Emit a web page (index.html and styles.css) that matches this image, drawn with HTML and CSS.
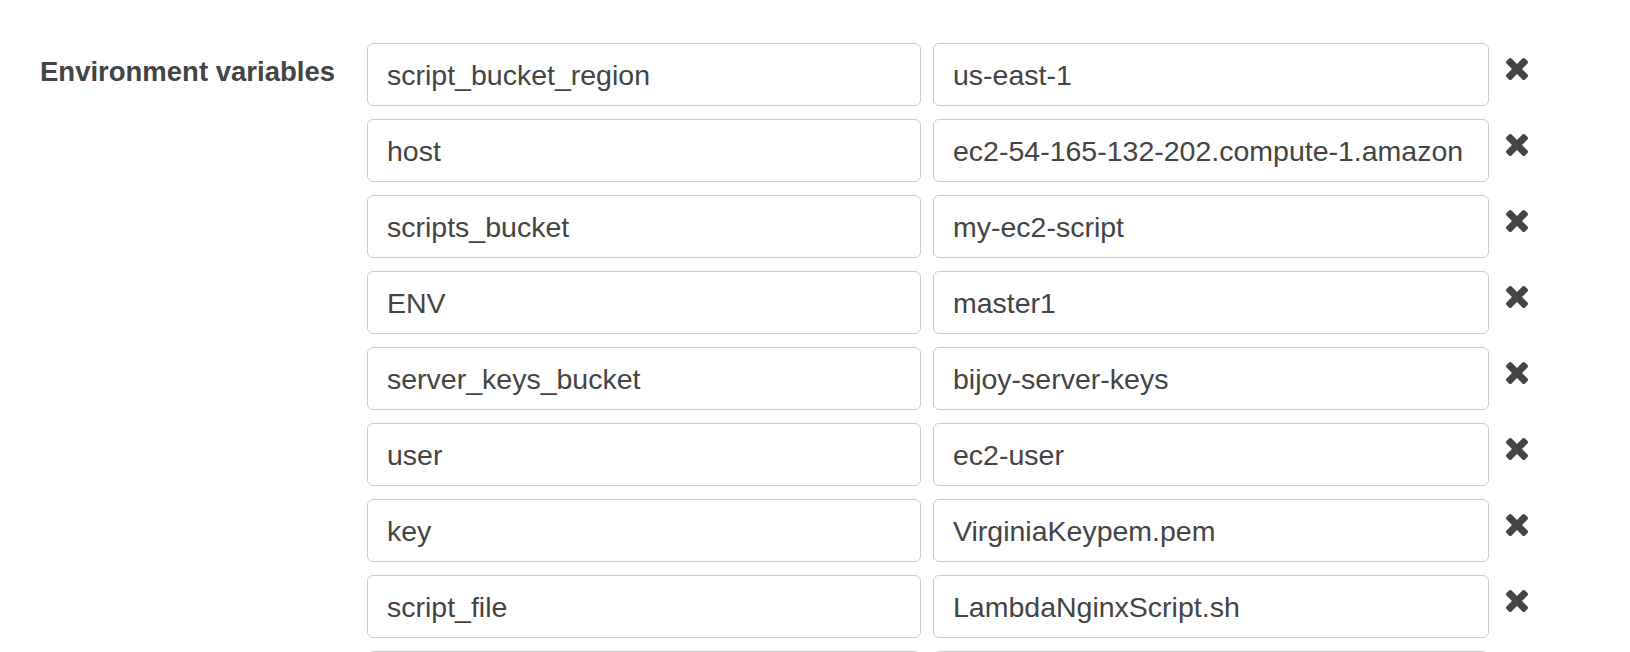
FILE: index.html
```html
<!DOCTYPE html>
<html lang="en">
<head>
<meta charset="utf-8">
<title>Environment variables</title>
<link rel="stylesheet" href="styles.css">
</head>
<body>
<div class="env">
  <div class="env-label">Environment variables</div>
  <div class="env-rows">
    <div class="env-row">
      <div class="field"><span class="val">script_bucket_region</span></div>
      <div class="field"><span class="val">us-east-1</span></div>
      <span class="remove"><svg viewBox="110 366 1188 1188" width="22" height="22"><path d="M1298 1322q0 40-28 68l-136 136q-28 28-68 28t-68-28l-294-294-294 294q-28 28-68 28t-68-28l-136-136q-28-28-28-68t28-68l294-294-294-294q-28-28-28-68t28-68l136-136q28-28 68-28t68 28l294 294 294-294q28-28 68-28t68 28l136 136q28 28 28 68t-28 68l-294 294 294 294q28 28 28 68z"/></svg></span>
    </div>
    <div class="env-row">
      <div class="field"><span class="val">host</span></div>
      <div class="field"><span class="val">ec2-54-165-132-202.compute-1.amazon</span></div>
      <span class="remove"><svg viewBox="110 366 1188 1188" width="22" height="22"><path d="M1298 1322q0 40-28 68l-136 136q-28 28-68 28t-68-28l-294-294-294 294q-28 28-68 28t-68-28l-136-136q-28-28-28-68t28-68l294-294-294-294q-28-28-28-68t28-68l136-136q28-28 68-28t68 28l294 294 294-294q28-28 68-28t68 28l136 136q28 28 28 68t-28 68l-294 294 294 294q28 28 28 68z"/></svg></span>
    </div>
    <div class="env-row">
      <div class="field"><span class="val">scripts_bucket</span></div>
      <div class="field"><span class="val">my-ec2-script</span></div>
      <span class="remove"><svg viewBox="110 366 1188 1188" width="22" height="22"><path d="M1298 1322q0 40-28 68l-136 136q-28 28-68 28t-68-28l-294-294-294 294q-28 28-68 28t-68-28l-136-136q-28-28-28-68t28-68l294-294-294-294q-28-28-28-68t28-68l136-136q28-28 68-28t68 28l294 294 294-294q28-28 68-28t68 28l136 136q28 28 28 68t-28 68l-294 294 294 294q28 28 28 68z"/></svg></span>
    </div>
    <div class="env-row">
      <div class="field"><span class="val">ENV</span></div>
      <div class="field"><span class="val">master1</span></div>
      <span class="remove"><svg viewBox="110 366 1188 1188" width="22" height="22"><path d="M1298 1322q0 40-28 68l-136 136q-28 28-68 28t-68-28l-294-294-294 294q-28 28-68 28t-68-28l-136-136q-28-28-28-68t28-68l294-294-294-294q-28-28-28-68t28-68l136-136q28-28 68-28t68 28l294 294 294-294q28-28 68-28t68 28l136 136q28 28 28 68t-28 68l-294 294 294 294q28 28 28 68z"/></svg></span>
    </div>
    <div class="env-row">
      <div class="field"><span class="val">server_keys_bucket</span></div>
      <div class="field"><span class="val">bijoy-server-keys</span></div>
      <span class="remove"><svg viewBox="110 366 1188 1188" width="22" height="22"><path d="M1298 1322q0 40-28 68l-136 136q-28 28-68 28t-68-28l-294-294-294 294q-28 28-68 28t-68-28l-136-136q-28-28-28-68t28-68l294-294-294-294q-28-28-28-68t28-68l136-136q28-28 68-28t68 28l294 294 294-294q28-28 68-28t68 28l136 136q28 28 28 68t-28 68l-294 294 294 294q28 28 28 68z"/></svg></span>
    </div>
    <div class="env-row">
      <div class="field"><span class="val">user</span></div>
      <div class="field"><span class="val">ec2-user</span></div>
      <span class="remove"><svg viewBox="110 366 1188 1188" width="22" height="22"><path d="M1298 1322q0 40-28 68l-136 136q-28 28-68 28t-68-28l-294-294-294 294q-28 28-68 28t-68-28l-136-136q-28-28-28-68t28-68l294-294-294-294q-28-28-28-68t28-68l136-136q28-28 68-28t68 28l294 294 294-294q28-28 68-28t68 28l136 136q28 28 28 68t-28 68l-294 294 294 294q28 28 28 68z"/></svg></span>
    </div>
    <div class="env-row">
      <div class="field"><span class="val">key</span></div>
      <div class="field"><span class="val">VirginiaKeypem.pem</span></div>
      <span class="remove"><svg viewBox="110 366 1188 1188" width="22" height="22"><path d="M1298 1322q0 40-28 68l-136 136q-28 28-68 28t-68-28l-294-294-294 294q-28 28-68 28t-68-28l-136-136q-28-28-28-68t28-68l294-294-294-294q-28-28-28-68t28-68l136-136q28-28 68-28t68 28l294 294 294-294q28-28 68-28t68 28l136 136q28 28 28 68t-28 68l-294 294 294 294q28 28 28 68z"/></svg></span>
    </div>
    <div class="env-row">
      <div class="field"><span class="val">script_file</span></div>
      <div class="field"><span class="val">LambdaNginxScript.sh</span></div>
      <span class="remove"><svg viewBox="110 366 1188 1188" width="22" height="22"><path d="M1298 1322q0 40-28 68l-136 136q-28 28-68 28t-68-28l-294-294-294 294q-28 28-68 28t-68-28l-136-136q-28-28-28-68t28-68l294-294-294-294q-28-28-28-68t28-68l136-136q28-28 68-28t68 28l294 294 294-294q28-28 68-28t68 28l136 136q28 28 28 68t-28 68l-294 294 294 294q28 28 28 68z"/></svg></span>
    </div>
    <div class="env-row">
      <div class="field"><span class="val"></span></div>
      <div class="field"><span class="val"></span></div>
      <span class="remove"></span>
    </div>
  </div>
</div>
</body>
</html>
```

FILE: styles.css
```css
html, body {
  margin: 0;
  padding: 0;
  background: #ffffff;
}

body {
  font-family: "Liberation Sans", Arial, Helvetica, sans-serif;
  color: #444444;
  overflow: hidden;
  height: 652px;
}

.env {
  display: flex;
  align-items: flex-start;
  padding-top: 43px;
}

.env-label {
  box-sizing: border-box;
  width: 367px;
  padding-left: 40px;
  margin-top: 13px;
  font-size: 27.5px;
  line-height: 32px;
  font-weight: bold;
  color: #444444;
}

.env-rows {
  display: flex;
  flex-direction: column;
  gap: 13px;
}

.env-row {
  display: grid;
  grid-template-columns: 554px 556px 22px;
  column-gap: 12px;
  align-items: start;
}

.field {
  box-sizing: border-box;
  height: 63px;
  border: 1px solid #cccccc;
  border-radius: 6px;
  padding: 0 20px 0 19px;
  display: flex;
  align-items: center;
  background: #ffffff;
}

.val {
  display: block;
  width: 100%;
  overflow: hidden;
  white-space: nowrap;
  font-size: 28.5px;
  line-height: 32px;
  color: #444444;
}

.remove {
  margin-top: 15px;
  margin-left: 5px;
  width: 22px;
  height: 22px;
  display: block;
}

.remove svg {
  display: block;
  fill: #444444;
}
```
